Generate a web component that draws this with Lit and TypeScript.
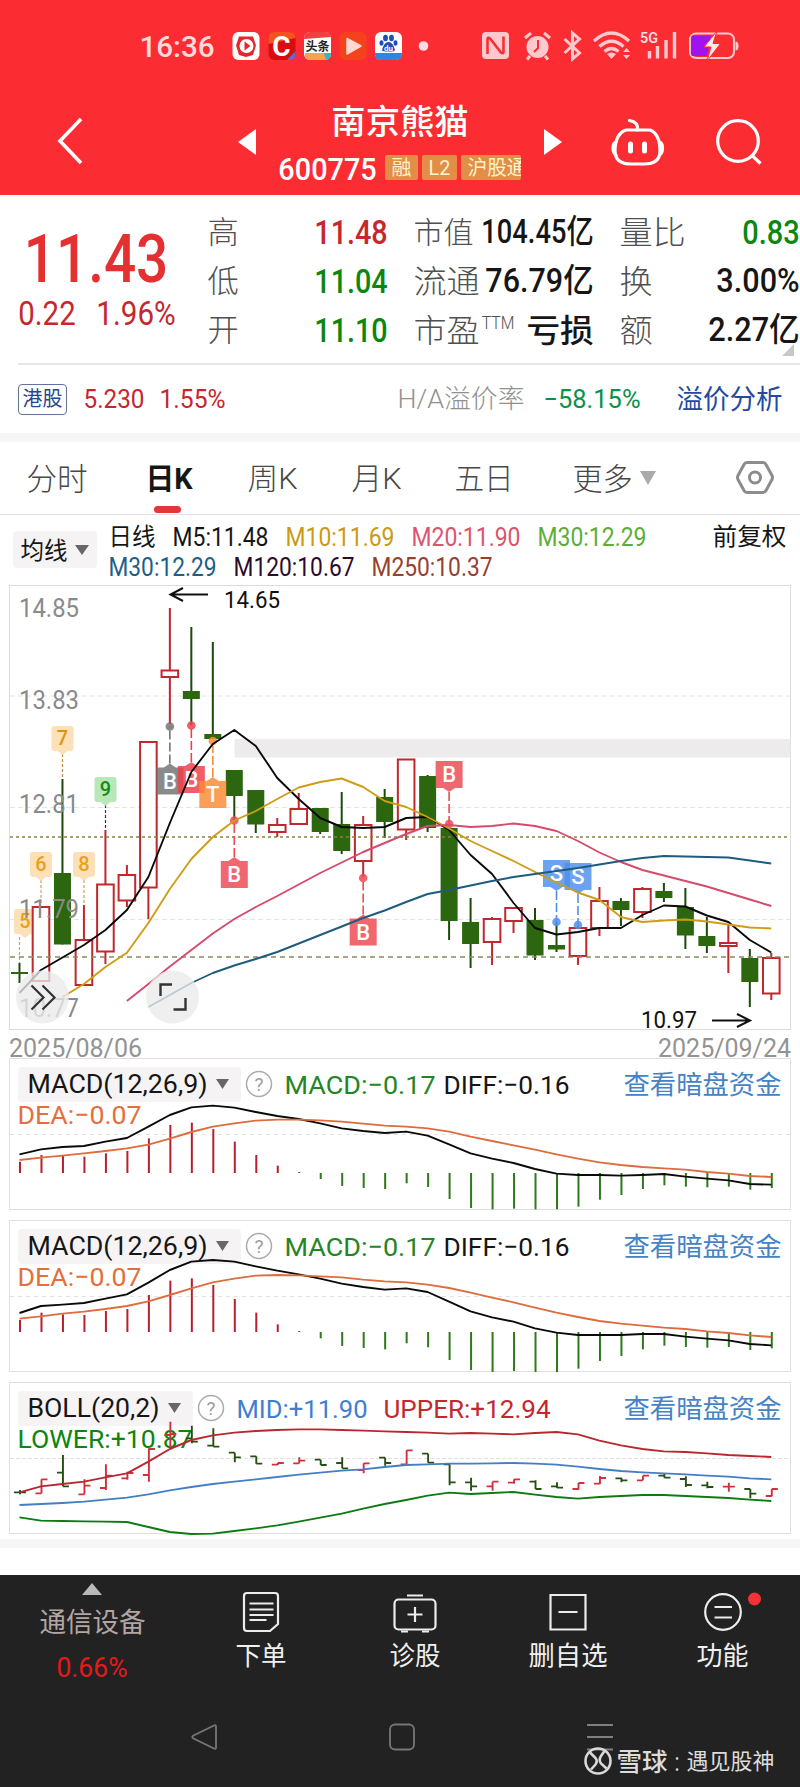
import { css, html, svg, LitElement } from "lit";
import { customElement } from "lit/decorators.js";

const UP = "#c1272d";
const DOWN = "#2c660f";

// Horizontal position of the n-th trading day.
const dayX = (i: number) => 19.5 + 21.48 * i;

// One line of text set to an exact ink width.
const label = (text: string, width: number, size: number, cls = "") => {
  const pad = size * 0.02;
  return html`<svg class="label ${cls}" width=${width} height=${size}>
    <text x=${-pad} y=${size * 0.86} font-size=${size} textLength=${width + pad * 2} lengthAdjust="spacingAndGlyphs">${text}</text>
  </svg>`;
};

const chartText = (text: string, x: number, y: number, width: number, size: number, fill: string) =>
  svg`<text x=${x} y=${y} font-size=${size} textLength=${width} lengthAdjust="spacingAndGlyphs" fill=${fill}>${text}</text>`;

const line = (ys: number[], color: string, toY: (v: number) => number, start = 0) =>
  svg`<polyline points=${ys.map((v, i) => `${dayX(i + start)},${toY(v)}`).join(" ")} fill="none" stroke=${color} stroke-width="1.9" stroke-linejoin="round" />`;

// high, body top, body bottom, low, rising
const candles: [number, number, number, number, number][] = [
  [963, 972, 974, 983, 0], [907, 907, 981, 981, 1], [779, 873, 944.5, 944.5, 0], [905, 940, 985, 985, 1],
  [830, 884.5, 951.5, 964, 1], [865, 875, 900.5, 907, 1], [742, 742, 887.5, 919, 1], [608, 670.5, 677, 724, 1],
  [627, 691, 699, 725, 0], [642, 734, 739, 739, 0], [770, 770, 796, 820, 0], [790, 790, 824.5, 833, 0],
  [818, 825, 832, 837, 1], [793, 809, 824, 824, 1], [808, 808, 832, 834, 0], [792, 824, 851, 854, 0],
  [816, 825, 861, 877, 1], [789, 797, 822, 838, 0], [759, 759.5, 829.5, 840, 1], [775, 776, 828, 832, 0],
  [828, 828, 921, 940, 0], [898, 922, 944, 968, 0], [917, 919, 942, 965, 1], [907, 908, 921, 933, 1],
  [908, 920, 955.5, 960, 0], [922, 945, 949.5, 952, 0], [926, 928, 956, 965, 1], [887, 901, 928, 936, 1],
  [898, 901, 910, 926, 0], [887, 889, 912, 918, 1], [883, 891, 898, 902, 0], [888, 907, 935.5, 949, 0],
  [917, 936, 946, 953, 0], [924, 943, 946, 973, 1], [949, 958, 982, 1007, 0], [953, 958, 993.5, 1000, 1],
];

const ma5 = [993, 970, 957.5, 945, 930, 910, 877, 823, 772, 744, 730, 746, 778, 799, 818, 827, 828, 827, 818, 817, 830, 855, 874, 903, 928, 934.5, 932, 928, 928, 915, 905.5, 906.5, 915.5, 922, 940, 952.5];
const ma10 = [997, 984, 967, 952.7, 923, 889, 859, 837, 820.5, 811, 799, 787.5, 782, 778.5, 787, 801, 807, 817, 828.5, 841, 851, 861, 872, 882.5, 892.5, 900, 917, 922, 920.5, 919.5, 921.5, 924.5, 927.5, 928.5];
const ma20 = [1001, 984, 966.5, 950, 933.5, 919, 907, 896, 884.5, 873, 862.5, 852, 843, 834, 826, 825, 827, 826, 823.5, 826, 831, 841, 852.5, 862, 870, 875.5, 881, 886.5, 893, 899.5, 906];
const ma30 = [1007, 995, 983, 973, 965.5, 959, 952, 943.5, 935, 926.5, 918, 910.5, 902, 894, 890, 885.5, 881, 877, 874, 871, 868, 864.5, 861, 858, 856, 856.5, 857, 857.5, 860.5, 863.5];

interface Macd { top: number; base: number; bars: number[]; diff: number[]; dea: number[] }

const macd1: Macd = {
  top: -6,
  base: 339,
  bars: [305, 285, 288, 290, 280, 273, 235, 195, 188, 207, 245, 285, 317, 336, 357, 378, 384, 387, 370, 381, 417, 444, 448, 446, 448, 448, 440, 419, 405, 387, 376, 380, 382, 380, 389, 384],
  diff: [283, 268, 261, 258, 245, 234, 200, 165, 142, 137, 143, 156, 168, 177, 190, 205, 213, 219, 215, 227, 253, 280, 296, 309, 327, 341, 345, 345, 347, 345, 342, 350, 356, 361, 372, 374],
  dea: [300, 293, 287, 280, 273, 265, 254, 236, 216, 200, 190, 182, 179, 179, 181, 185, 191, 197, 200, 205, 215, 230, 243, 256, 269, 283, 296, 307, 315, 321, 325, 329, 336, 341, 348, 351],
};

const macd2: Macd = {
  top: 480,
  base: 816,
  bars: [780, 758, 763, 765, 753, 747, 705, 662, 655, 675, 717, 758, 793, 813, 835, 858, 864, 868, 850, 862, 900, 930, 936, 933, 936, 936, 926, 903, 888, 868, 857, 861, 863, 861, 870, 865],
  diff: [759, 738, 734, 729, 716, 703, 668, 630, 605, 600, 605, 619, 632, 643, 656, 671, 681, 689, 685, 696, 725, 754, 772, 785, 805, 818, 825, 825, 825, 822, 822, 830, 836, 841, 852, 856],
  dea: [776, 769, 761, 755, 747, 738, 724, 705, 685, 667, 656, 647, 645, 646, 649, 652, 659, 664, 667, 674, 684, 698, 713, 727, 743, 758, 771, 783, 791, 797, 803, 807, 814, 819, 826, 831],
};

const bollUpper = [352, 334, 327, 320, 307, 295, 260, 222, 195, 181, 173, 168, 165, 163, 163, 165, 167, 169, 171, 173, 176, 174, 176, 178, 174, 171, 178, 197, 211, 222, 229, 231, 235, 240, 243, 246];
const bollMid = [390, 387, 384, 380, 374, 368, 358, 346, 336, 327, 320, 313, 306, 299, 293, 287, 283, 276, 270, 268, 266, 266, 265, 264, 266, 269, 275, 282, 288, 292, 295, 298, 302, 305, 310, 313];
const bollLower = [427, 437, 438, 439, 440, 441, 456, 471, 477, 476, 468, 460, 451, 440, 428, 416, 401, 387, 375, 362, 353, 357, 354, 351, 359, 366, 371, 366, 363, 360, 360, 363, 366, 369, 374, 378];

// open, high, low, close, rising
const ohlc: [number, number, number, number, number][] = [
  [352, 345, 358, 352, 0], [355, 313, 355, 313, 1], [293, 240, 334, 334, 0], [358, 313, 358, 332, 1],
  [339, 268, 345, 302, 1], [310, 290, 314, 294, 1], [300, 220, 320, 222, 1], [180, 140, 216, 177, 1],
  [190, 152, 205, 200, 0], [212, 160, 214, 215, 0], [233, 233, 262, 247, 0], [244, 244, 266, 266, 0],
  [269, 264, 270, 264, 1], [265, 247, 265, 257, 1], [254, 254, 270, 270, 0], [264, 247, 280, 280, 0],
  [285, 265, 295, 265, 1], [248, 248, 272, 264, 0], [268, 226, 270, 226, 1], [236, 236, 263, 263, 0],
  [268, 268, 331, 322, 0], [322, 308, 347, 334, 0], [334, 320, 347, 320, 1], [323, 313, 326, 313, 1],
  [320, 316, 342, 342, 0], [334, 322, 339, 338, 0], [342, 324, 344, 324, 1], [326, 303, 328, 309, 1],
  [310, 308, 322, 316, 0], [316, 302, 316, 302, 1], [302, 297, 308, 308, 0], [312, 304, 336, 330, 0],
  [331, 320, 340, 336, 0], [335, 323, 350, 335, 1], [342, 342, 370, 356, 0], [363, 342, 364, 342, 1],
];

const candle = ([high, top, bottom, low, up]: number[], i: number) => {
  const x = dayX(i);
  return up
    ? svg`<path d="M${x} ${high}V${top}M${x} ${bottom}V${low}" stroke=${UP} stroke-width="2" />
        <rect x=${x - 8.3} y=${top} width="16.6" height=${bottom - top} fill="#fff" stroke=${UP} stroke-width="2" />`
    : svg`<path d="M${x} ${high}V${low}" stroke="#1c4a0c" stroke-width="2" />
        <rect x=${x - 8.5} y=${top} width="17" height=${bottom - top} fill=${DOWN} />`;
};

// Trade flag: a lettered box with a tip towards its dot.
const flag = (x: number, y: number, letter: string, color: string, dotY: number, size = 27) => {
  const below = dotY > y;
  const edge = below ? y + size : y;
  const tip = below ? edge + 4 : edge - 4;
  return svg`
    <path d="M${x} ${tip}V${dotY}" stroke=${color} stroke-width="1.6" stroke-dasharray="9 3" />
    <circle cx=${x} cy=${dotY} r="4.3" fill=${color} opacity="0.85" />
    <g fill=${color} opacity="0.84">
      <path d="M${x - size / 2} ${y}h${size}v${size}h${-size}ZM${x - 6} ${edge}L${x} ${tip}L${x + 6} ${edge}Z" stroke-linejoin="round" />
    </g>
    <text x=${x} y=${y + 21} font-size="22" text-anchor="middle" fill="#fff" font-weight="500">${letter}</text>`;
};

const countPin = (x: number, y: number, n: string, bg: string, color: string, lineX: number, lineEnd: number, dash: string) => svg`
  <path d="M${lineX} ${y + 28}V${lineEnd}" stroke=${dash} stroke-width="1.2" stroke-dasharray="3 2" />
  <path d="M${x - 8} ${y}h16q3 0 3 3v19q0 3 -3 3h-3l-5 4l-5 -4h-3q-3 0 -3 -3v-19q0 -3 3 -3Z" fill=${bg} opacity="0.85" />
  <text x=${x} y=${y + 19} font-size="20" text-anchor="middle" fill=${color} font-weight="500">${n}</text>`;

@customElement("app-root")
export class AppRootElement extends LitElement {
  renderStatusBar() {
    return html`
      <div class="status">
        ${label("16:36", 74, 30, "medium pale")}
        <svg class="apps" width="200" height="32" viewBox="230 30 200 32">
          <rect x="232.500" y="32" width="27" height="28" rx="6" fill="#fff" />
          <path d="M239 36.500h14l3 9-3 9.500-7 2-7-2-3-9.500Z" fill="#e3272d" />
          <circle cx="246.500" cy="46" r="7" fill="#fff" /><path d="M244.500 41.500l6 4.500-6 4.500Z" fill="#e3272d" />
          <rect x="268.500" y="32" width="27" height="28" rx="6" fill="#d90c10" />
          <path d="M268.500 44v-6q0-6 6-6h15q6 0 6 6Z" fill="#f4521e" />
          <text x="281.500" y="56" text-anchor="middle" font-size="28" font-weight="700" fill="#fff">C</text>
          <path d="M287 60l8.500-9v4q-1 5-5 5Z" fill="#5a6fd8" />
          <rect x="304" y="32" width="27" height="28" rx="6" fill="#fff" />
          <path d="M304 39v-1q0-6 6-6h15q6 0 6 5Z" fill="#f04142" />
          <text x="317.500" y="51" text-anchor="middle" font-size="12" font-weight="700" fill="#222">头条</text>
          <path d="M305 53h26v1q-1 6-6 6h-15q-4 0-5-4Z" fill="#f3a54e" /><path d="M324 53h7q0 6-5 7Z" fill="#35b5c8" />
          <rect x="339.500" y="32" width="27" height="28" rx="6" fill="#f4431c" />
          <path d="M347 38.500l14 7.500-14 8Z" fill="#ffd9d0" stroke="#ffd9d0" stroke-width="1.500" stroke-linejoin="round" />
          <rect x="375" y="32" width="27" height="28" rx="6" fill="#fff" />
          <path d="M375 53h27v1q0 6-6 6h-15q-6 0-6-6Z" fill="#2f86dc" />
          <g fill="#1d4fb5">
            <ellipse cx="385.500" cy="38" rx="2.400" ry="3.300" /><ellipse cx="391.500" cy="38" rx="2.400" ry="3.300" />
            <ellipse cx="381.500" cy="43" rx="2" ry="2.800" /><ellipse cx="395.500" cy="43" rx="2" ry="2.800" />
            <path d="M388.500 42q3 0 5 4t1 5q-6 1-12 0-1-1 1-5t5-4Z" />
          </g>
          <text x="388.500" y="50.500" text-anchor="middle" font-size="8" font-weight="700" fill="#fff">du</text>
          <circle cx="423.500" cy="46" r="4.800" fill="#ffdcde" />
        </svg>
        <svg class="signals" width="260" height="32" viewBox="480 30 260 32">
          <rect x="482" y="32" width="27" height="27" rx="4" fill="#ffc9cd" />
          <path d="M487.500 54v-14.500q0-3 2.500-1l11 14q2.500 2 2.500-1v-15" fill="none" stroke="#fb2d33" stroke-width="2.600" />
          <circle cx="537.500" cy="47" r="11" fill="#ffc9cd" />
          <path d="M525 38l6-5M550 38l-6-5M530 56l-3 3.500M545 56l3 3.500" stroke="#ffc9cd" stroke-width="3" />
          <path d="M538 40v8l-4 4" stroke="#fb2d33" stroke-width="2" fill="none" />
          <path d="M564.500 39l15 14-7 6V33l7 6-15 14" fill="none" stroke="#ffc9cd" stroke-width="3" />
          <g fill="none" stroke="#ffc9cd" stroke-width="3.400">
            <path d="M594 41q17.500-16 35 0M599.500 46.500q12-10.500 24 0M604.500 51.500q7-6 14 0" />
          </g>
          <path d="M607 54q4.500-3 9 0l-4.500 5Z" fill="#ffc9cd" /><path d="M623 52l3.500-4 3.500 4ZM623 55l3.500 4 3.500-4Z" fill="#ffc9cd" />
          <text x="640" y="42.500" font-size="15" font-weight="600" textLength="18" lengthAdjust="spacingAndGlyphs" fill="#ffdcde">5G</text>
          <path d="M649.500 51v7.500M657.500 46v12.500M666 40v18.500M674.500 32v26.500" stroke="#ffc9cd" stroke-width="3.400" />
          <rect x="690" y="33.500" width="44" height="24.500" rx="6" fill="none" stroke="#ffc9cd" stroke-width="2" />
          <path d="M692 35.500h19l-4 20.500h-15q-1-1-1-4v-13q0-3 1-3.500Z" fill="#a012f0" />
          <path d="M735.500 41.500q3 0 3 4.500t-3 4.500Z" fill="#ffc9cd" />
          <path d="M717 31l-13 16h7l-4 14 13.500-17.500h-7.500Z" fill="#ffe9ea" stroke="#fb2d33" stroke-width="1" />
        </svg>
      </div>
    `;
  }

  renderTitleBar() {
    return html`
      <div class="titlebar">
        <svg width="30" height="50"><path d="M25 2L4 24L25 46" fill="none" stroke="#fff" stroke-width="3.600" /></svg>
        <svg width="20" height="26"><path d="M19 0v26L1 13Z" fill="#fff" /></svg>
        <div class="stock">
          ${label("南京熊猫", 136, 34, "medium")}
          <div class="code-row">
            ${label("600775", 97, 32, "medium")}
            <span class="tag">${label("融", 19, 20)}</span>
            <span class="tag">${label("L2", 21, 20)}</span>
            <span class="tag cut">${label("沪股通", 58, 20)}</span>
          </div>
        </div>
        <svg width="20" height="26"><path d="M1 0v26L19 13Z" fill="#fff" /></svg>
        <svg width="54" height="50" fill="none" stroke="#fff" stroke-width="3.200">
          <path d="M15 13h24q10 4 10 21q0 13-16 13h-13q-16 0-16-13q0-17 11-21Z" stroke-linejoin="round" />
          <path d="M5 25q-3 1-3 6t3 7M48.500 25q3 1 3 6t-3 7M26.500 13q1-8-8-9.500" stroke-linecap="round" />
          <path d="M19.500 27v7M33.500 27v7" stroke-width="5" stroke-linecap="round" />
        </svg>
        <svg width="50" height="50" fill="none" stroke="#fff" stroke-width="3.200"><circle cx="24" cy="24" r="20.300" /><path d="M38 38.500L46.500 46.500" /></svg>
      </div>
    `;
  }

  renderQuote() {
    return html`
      <section class="quote">
        <div class="price">
          ${label("11.43", 142, 67, "medium red")}
          <div class="change">${label("0.22", 56, 33, "up")}${label("1.96%", 78, 33, "up")}</div>
        </div>
        <div class="stats">
          <div class="pair">${label("高", 30, 31, "dim")}${label("11.48", 72, 33.5, "up medium")}</div>
          <div class="pair">${label("市值", 59, 30, "dim")}${label("104.45亿", 111, 33, "medium")}</div>
          <div class="pair">${label("量比", 65, 32, "dim")}${label("0.83", 56, 33.5, "down medium")}</div>
          <div class="pair">${label("低", 30, 31, "dim")}${label("11.04", 72, 33.5, "down medium")}</div>
          <div class="pair">${label("流通", 65, 32, "dim")}${label("76.79亿", 107, 33, "medium")}</div>
          <div class="pair">${label("换", 32, 32, "dim")}${label("3.00%", 82, 33, "medium")}</div>
          <div class="pair">${label("开", 30, 31, "dim")}${label("11.10", 72, 33.5, "down medium")}</div>
          <div class="pair"><span class="pe">${label("市盈", 65, 32, "dim")}${label("TTM", 32, 18, "dim")}</span>${label("亏损", 66, 32, "medium")}</div>
          <div class="pair">${label("额", 32, 32, "dim")}${label("2.27亿", 90, 33, "medium")}</div>
        </div>
        <svg class="corner" width="12" height="12"><path d="M12 0v12H0Z" fill="#c8c8c8" /></svg>
      </section>
      <section class="hk">
        <span class="hk-badge">${label("港股", 39, 20)}</span>
        ${label("5.230", 60, 26, "hk-price up")}
        ${label("1.55%", 65, 26, "up")}
        <span class="grow"></span>
        ${label("H/A溢价率", 126, 26, "faint")}
        ${label("−58.15%", 96, 26, "premium")}
        ${label("溢价分析", 105, 27, "link")}
      </section>
    `;
  }

  renderTabs() {
    return html`
      <nav class="tabs">
        ${label("分时", 60, 31)}
        <span class="active">${label("日K", 46, 30, "bold")}</span>
        ${label("周K", 49, 30)}
        ${label("月K", 49, 30)}
        ${label("五日", 58, 30)}
        <span class="more">${label("更多", 59, 31)}<svg width="16" height="14"><path d="M0 0h16L8 14Z" fill="#aaa" /></svg></span>
        <svg width="38" height="36" fill="none" stroke="#8c8c8c" stroke-width="3"><path d="M11 2.500h16q2 0 3 2l6 11q1 2 0 4l-6 11q-1 2-3 2h-16q-2 0-3-2l-6-11q-1-2 0-4l6-11q1-2 3-2Z" /><circle cx="19" cy="17.500" r="5.500" /></svg>
      </nav>
      <div class="averages">
        <span class="picker small">${label("均线", 46, 24)}<svg width="14" height="10"><path d="M0 0h14L7 10Z" fill="#6a6668" /></svg></span>
        <div class="ma">
          <div class="ma-row">
            ${label("日线", 46, 24)}${label("M5:11.48", 95, 25)}${label("M10:11.69", 108, 25, "ma10")}${label("M20:11.90", 108, 25, "ma20")}${label("M30:12.29", 108, 25, "ma30")}
          </div>
          <div class="ma-row">
            ${label("M30:12.29", 107, 25, "ma60")}${label("M120:10.67", 120, 25, "ma120")}${label("M250:10.37", 120, 25, "ma250")}
          </div>
        </div>
        <span class="adjust">${label("前复权", 73, 24)}</span>
      </div>
    `;
  }

  renderKLine() {
    const same = (v: number) => v;
    return html`
      <svg class="kline" width="800" height="480" viewBox="0 580 800 480">
        <rect x="9.500" y="585.500" width="781" height="444" fill="none" stroke="#dcdcdc" />
        <path d="M10 696H790M10 807.500H790M10 919.500H790" stroke="#e4e4e4" stroke-dasharray="5 3" />
        <rect x="234.500" y="739" width="556" height="18.500" fill="#eeebec" />
        ${countPin(62.5, 726, "7", "#fcdcab", "#dd950d", 62.5, 779, "#b98a40")}
        ${countPin(105.5, 777, "9", "#ace3ae", "#128c12", 105.5, 830, "#1c4a0c")}
        ${countPin(41, 852, "6", "#fcdcab", "#eaa01c", 41, 905, "#c9a468")}
        ${countPin(84, 852, "8", "#fcdcab", "#eaa01c", 84, 905, "#c9a468")}
        ${countPin(25, 909, "5", "#fcdcab", "#eaa01c", 19.5, 963, "#c9a468")}
        ${candles.map(candle)}
        <path d="M10 837H790" stroke="#8a7f45" stroke-width="1.600" stroke-dasharray="3 3" />
        <path d="M10 957H790" stroke="#8a8a60" stroke-width="1.600" stroke-dasharray="5 4" />
        ${chartText("14.85", 19, 617, 60, 26, "#8a8a8a")}
        ${chartText("13.83", 19, 709, 60, 26, "#8a8a8a")}
        ${chartText("12.81", 19, 813, 60, 26, "#8a8a8a")}
        ${chartText("11.79", 19, 918, 60, 26, "#8a8a8a")}
        ${chartText("10.77", 19, 1017, 60, 26, "#8a8a8a")}
        ${flag(dayX(7), 767.5, "B", "#757475", 726.5)}
        ${flag(dayX(8), 766, "B", "#ee3f4c", 725.5)}
        ${flag(dayX(9), 781, "T", "#fb8c35", 741)}
        ${flag(dayX(10), 861, "B", "#ee4a54", 820.5)}
        ${flag(dayX(16), 918.5, "B", "#ee4a54", 878)}
        ${flag(dayX(20), 761, "B", "#ee4a54", 824)}
        ${flag(dayX(25), 860, "S", "#5090ec", 922)}
        ${flag(dayX(26), 863, "S", "#5090ec", 925)}
        ${line(ma5, "#0a0a0a", same)}
        ${line(ma10, "#cf9d14", same, 2)}
        ${line(ma20, "#d64a6b", same, 5)}
        ${line(ma30, "#1d5c7c", same, 6)}
        ${chartText("14.65", 224, 608, 56, 23, "#111")}
        <path d="M208 594.500H170.500M183 588L170.500 594.500L183 601" fill="none" stroke="#111" stroke-width="2" />
        ${chartText("10.97", 641, 1028, 56, 23, "#111")}
        <path d="M712 1020.500H750M737 1014L750 1020.500L737 1027" fill="none" stroke="#111" stroke-width="2" />
        <circle cx="42.500" cy="997" r="26.500" fill="#ebebeb" opacity="0.78" />
        <path d="M31.500 985.500L43.500 997.500L31.500 1009.500M42.500 985.500L54.500 997.500L42.500 1009.500" fill="none" stroke="#333" stroke-width="2.200" />
        <circle cx="172.500" cy="997" r="26.500" fill="#ebebeb" opacity="0.78" />
        <path d="M160.500 996V984.500H172M185.500 998V1009.500H173.500" fill="none" stroke="#333" stroke-width="2.400" />
        ${chartText("2025/08/06", 9, 1057, 133, 25.5, "#939393")}
        ${chartText("2025/09/24", 658, 1057, 133, 25.5, "#939393")}
      </svg>
    `;
  }

  renderPicker(name: string, width: number) {
    return html`
      <span class="picker">${label(name, width, 26)}<svg width="13" height="10"><path d="M0 0h13L6.500 10Z" fill="#6a6668" /></svg></span>
      <svg class="help" width="28" height="28"><circle cx="14" cy="14" r="12.500" fill="none" stroke="#ababab" stroke-width="1.500" /><text x="14" y="21" text-anchor="middle" font-size="19" fill="#9d9d9d">?</text></svg>
    `;
  }

  renderMacd(data: Macd) {
    const toY = (v: number) => (v - data.top) / 3;
    return html`
      <section class="panel">
        <div class="panel-head">
          <div class="panel-row">
            ${this.renderPicker("MACD(12,26,9)", 179)}
            ${label("MACD:−0.17", 150, 26.5, "macd")}
            ${label("DIFF:−0.16", 125, 26.5)}
            <span class="grow"></span>
            ${label("查看暗盘资金", 157, 26.5, "sky")}
          </div>
          ${label("DEA:−0.07", 123, 26.5, "dea")}
        </div>
        <svg class="plot" width="800" height="153">
          <path d="M10 76.500H790" stroke="#e2e2e2" stroke-dasharray="4 4" />
          ${data.bars.map((v, i) => svg`<path d="M${dayX(i) + 0.5} ${toY(data.base)}V${toY(v)}" stroke=${v < data.base ? "#b5202c" : "#2c7a1a"} stroke-width="2" />`)}
          ${line(data.diff, "#0a0a0a", toY)}
          ${line(data.dea, "#dd6c3f", toY)}
        </svg>
      </section>
    `;
  }

  renderBoll() {
    const toY = (v: number) => (v - 21) / 3;
    return html`
      <section class="panel">
        <div class="panel-head">
          <div class="panel-row">
            ${this.renderPicker("BOLL(20,2)", 131)}
            ${label("MID:+11.90", 130, 26.5, "mid")}
            ${label("UPPER:+12.94", 166, 26.5, "upper")}
            <span class="grow"></span>
            ${label("查看暗盘资金", 157, 26.5, "sky")}
          </div>
          ${label("LOWER:+10.87", 174, 26.5, "lower")}
        </div>
        <svg class="plot" width="800" height="153">
          <path d="M10 76.500H790" stroke="#e2e2e2" stroke-dasharray="4 2" />
          ${ohlc.map(([o, h, l, c, up], i) => {
            const x = dayX(i) + 0.5;
            return svg`<path d="M${x - 6} ${toY(o)}H${x}M${x} ${toY(h)}V${toY(l)}M${x} ${toY(c)}H${x + 6}" stroke=${up ? "#d1303a" : "#274f14"} stroke-width="1.900" />`;
          })}
          ${line(bollUpper, "#b8282f", toY)}
          ${line(bollMid, "#447fc4", toY)}
          ${line(bollLower, "#0d7a12", toY)}
        </svg>
      </section>
    `;
  }

  renderBottom() {
    return html`
      <footer class="bottom">
        <div class="actions">
          <div class="sector">
            <svg width="20" height="12"><path d="M10 0l10 12H0Z" fill="#b9b9b9" /></svg>
            ${label("通信设备", 105, 27, "sector-name")}
            ${label("0.66%", 70, 28, "sector-change")}
          </div>
          <div class="action">
            <svg width="38" height="42" fill="none" stroke="#ececec" stroke-width="2.200"><path d="M5 2h28q3 0 3 3v28l-8 7H5q-3 0-3-3V5q0-3 3-3ZM7.500 12.500h24M7.500 18.500h24M7.500 24h24M7.500 29h17" /></svg>
            ${label("下单", 50, 26)}
          </div>
          <div class="action">
            <svg width="44" height="42" fill="none" stroke="#ececec" stroke-width="2.200"><rect x="1.500" y="8.500" width="41" height="30" rx="4" /><path d="M14 4.500h16M22 16v15M14.500 23.500h15M8 40.500h7M29 40.500h7" /></svg>
            ${label("诊股", 50, 26)}
          </div>
          <div class="action">
            <svg width="38" height="42" fill="none" stroke="#ececec" stroke-width="2.200"><path d="M1.500 4h35v34.500h-35ZM9.500 21h19" /></svg>
            ${label("删自选", 78, 26)}
          </div>
          <div class="action">
            <svg width="38" height="42" fill="none" stroke="#ececec" stroke-width="2.200"><circle cx="19" cy="21" r="17.800" /><path d="M10.500 16h17.500M10.500 26.500h17.500" /><circle cx="50.500" cy="8" r="6.500" fill="#f03434" stroke="none" /></svg>
            ${label("功能", 51, 26)}
          </div>
        </div>
        <div class="system">
          <svg width="28" height="28"><path d="M24 2.500q2-1 2 1v21q0 2-2 1L3.500 15.500q-2.500-1.500 0-3Z" fill="none" stroke="#777" stroke-width="1.800" /></svg>
          <svg width="28" height="28"><rect x="2" y="1.500" width="24" height="25" rx="5" fill="none" stroke="#777" stroke-width="1.800" /></svg>
          <svg width="28" height="28"><path d="M1 2h26M1 14h26M1 26.500h26" stroke="#808080" stroke-width="2" /></svg>
        </div>
        <div class="watermark">
          <svg width="28" height="28" fill="none" stroke="#d9d9d9" stroke-width="2.600"><circle cx="14" cy="14" r="12.500" /><path d="M6 5.500L11.500 11Q14 14 11.500 17.500L7 22.500M20.500 4L17 9Q14.500 13 17 16.500L22.500 21.500" /></svg>
          ${label("雪球", 50, 25, "medium")}${label(":", 4, 25)}${label("遇见股神", 87, 22)}
        </div>
      </footer>
    `;
  }

  render() {
    return html`
      <header>${this.renderStatusBar()}${this.renderTitleBar()}</header>
      ${this.renderQuote()}
      <div class="band"></div>
      ${this.renderTabs()}
      ${this.renderKLine()}
      <div class="panels">${this.renderMacd(macd1)}${this.renderMacd(macd2)}${this.renderBoll()}</div>
      <div class="band"></div>
      ${this.renderBottom()}
    `;
  }

  static styles = css`
    :host {
      display: flex;
      flex-direction: column;
      width: 800px;
      height: 1787px;
      overflow: hidden;
      background: #fff;
      color: #161616;
      font-family: Roboto, "Noto Sans CJK SC", sans-serif;
    }

    svg {
      display: block;
      flex: none;
      overflow: visible;
    }

    .label { fill: currentColor; }
    .medium { font-weight: 500; }
    .bold { font-weight: 700; }
    .grow { flex: 1; }
    .red { color: #e52f31; }
    .up { color: #c5272d; }
    .down { color: #0b860f; }
    .dim { color: #505050; font-weight: 300; }
    .faint { color: #909090; font-weight: 300; }
    .premium { color: #0a9147; }
    .link { color: #2449a2; }
    .pale { color: #ffd9dc; }

    header {
      box-sizing: border-box;
      height: 195px;
      background: #fb2d33;
      color: #fff;
    }

    .status {
      display: flex;
      align-items: center;
      height: 92px;
      padding-left: 140px;
    }

    .apps { margin-left: 16px; }
    .signals { margin-left: 50px; }

    .titlebar {
      display: grid;
      grid-template-columns: 181px 40px 266px 68px 103px 50px;
      align-items: center;
      height: 99px;
      padding-left: 56px;
    }

    .stock {
      display: flex;
      flex-direction: column;
      align-items: center;
      gap: 16px;
      width: 244px;
      margin-left: 1px;
      padding-top: 2px;
    }

    .code-row {
      display: flex;
      align-items: center;
      gap: 4px;
      height: 26px;
    }

    .code-row > .label { margin-right: 5px; }

    .tag {
      display: flex;
      align-items: center;
      height: 25px;
      padding: 0 7px;
      border-radius: 2px;
      background: #e38e47;
      color: #fff2cd;
    }

    .tag.cut {
      width: 53px;
      padding-right: 0;
      overflow: hidden;
    }

    .quote {
      display: grid;
      grid-template-columns: 208px 592px;
      position: relative;
      height: 168px;
    }

    .price {
      display: flex;
      flex-direction: column;
      padding: 29px 0 0 19px;
    }

    .price > .label { margin-left: 6px; }

    .change {
      display: flex;
      gap: 22px;
      margin-top: 6px;
    }

    .stats {
      display: grid;
      grid-template-columns: 179px 179px 179px;
      grid-template-rows: repeat(3, 49px);
      column-gap: 27px;
      padding-top: 12px;
    }

    .pair {
      display: flex;
      align-items: center;
      justify-content: space-between;
    }

    .pe { display: flex; gap: 3px; }

    .corner {
      position: absolute;
      right: 6px;
      bottom: 7px;
    }

    .hk {
      display: flex;
      align-items: center;
      height: 68px;
      margin-left: 18px;
      padding-right: 18px;
      border-top: 2px solid #e6e6e6;
    }

    .hk-badge {
      display: flex;
      align-items: center;
      justify-content: center;
      width: 47px;
      height: 29px;
      border: 1.5px solid #62739b;
      border-radius: 4px;
      color: #27488c;
    }

    .hk-price { margin: 0 16px 0 17px; }
    .premium { margin: 0 37px 0 20px; }

    .band {
      flex: none;
      height: 9px;
      background: #f6f6f6;
    }

    .tabs {
      display: grid;
      grid-template-columns: 119px 102px 104px 103px 118px 163px 40px;
      align-items: center;
      box-sizing: border-box;
      height: 73px;
      padding-left: 27px;
      border-bottom: 1px solid #e2e2e2;
      color: #484848;
      font-weight: 300;
    }

    .active {
      position: relative;
      color: #161616;
    }

    .active::after {
      content: "";
      position: absolute;
      left: 8px;
      top: 43px;
      width: 27px;
      height: 7px;
      border-radius: 4px;
      background: #e5363a;
    }

    .more {
      display: flex;
      align-items: center;
      gap: 8px;
    }

    .averages {
      display: flex;
      height: 65px;
      padding: 0 14px 0 13px;
    }

    .picker {
      display: flex;
      align-items: center;
      gap: 9px;
      height: 35px;
      padding: 0 12px 0 10px;
      border-radius: 4px;
      background: #f6f3f4;
    }

    .picker.small {
      gap: 8px;
      height: 37px;
      margin-top: 16px;
      padding: 0 8px;
    }

    .ma {
      display: flex;
      flex-direction: column;
      gap: 5px;
      padding: 9px 0 0 12px;
    }

    .ma-row {
      display: flex;
      gap: 18px;
    }

    .adjust { margin: 9px 0 0 auto; }

    .ma10 { color: #cb9a14; }
    .ma20 { color: #d9566f; }
    .ma30 { color: #5dae38; }
    .ma60 { color: #1d5f86; }
    .ma120 { color: #2e0a2c; }
    .ma250 { color: #98402e; }

    .kline { margin-bottom: -2px; }

    .panels {
      display: flex;
      flex-direction: column;
      gap: 10px;
      padding-bottom: 5px;
    }

    .panel {
      display: grid;
      height: 152px;
    }

    .panel-head,
    .plot { grid-area: 1 / 1; }

    .panel-head {
      box-sizing: border-box;
      width: 782px;
      height: 152px;
      margin-left: 9px;
      padding: 8px 9px 0 8px;
      border: 1px solid #dfdfdf;
    }

    .panel-row {
      display: flex;
      align-items: center;
      height: 34px;
    }

    .help { margin: 0 12px 0 4px; }
    .macd { margin-right: 9px; color: #258523; }
    .dea { color: #e56f3c; }
    .mid { margin-right: 17px; color: #3f7fcf; }
    .upper { color: #c4282f; }
    .lower { color: #0b860f; }
    .sky { color: #4583c7; }

    .bottom {
      position: relative;
      flex: 1;
      margin-top: 27px;
      background: #222;
      color: #f0f0f0;
    }

    .actions {
      display: grid;
      grid-template-columns: 184px 154px 153px 154px 155px;
      height: 126px;
    }

    .sector,
    .action {
      display: flex;
      flex-direction: column;
      align-items: center;
    }

    .sector { padding-top: 8px; }

    .action {
      gap: 10px;
      padding-top: 16px;
    }

    .sector-name {
      margin-top: 14px;
      color: #b3a5a3;
    }

    .sector-change {
      margin-top: 17px;
      color: #e31a1c;
    }

    .system {
      display: flex;
      gap: 170px;
      padding: 22px 0 0 190px;
    }

    .watermark {
      position: absolute;
      right: 26px;
      bottom: 12px;
      display: flex;
      align-items: center;
      gap: 8px;
      color: #dcdcdc;
    }

    .watermark svg:first-child { margin-right: -3px; }
  `;
}
